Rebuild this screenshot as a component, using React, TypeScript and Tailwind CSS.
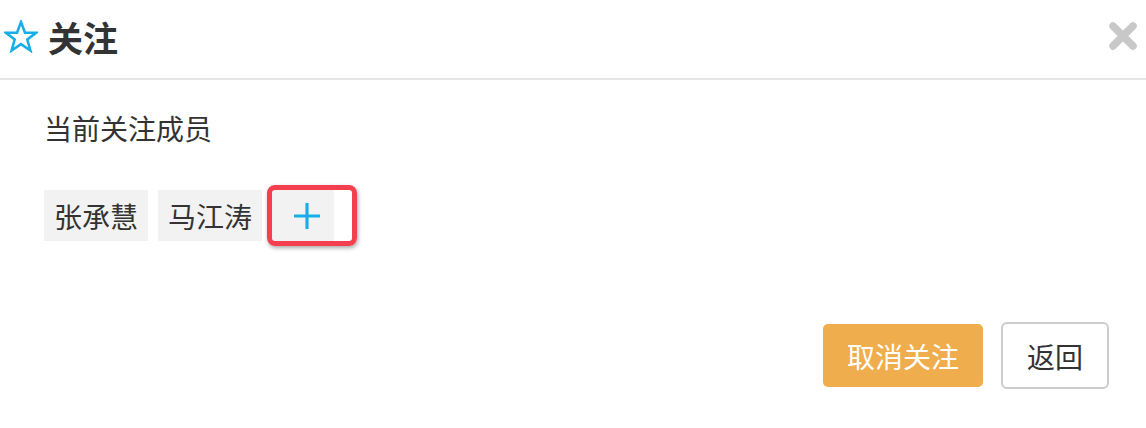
const font = { fontFamily: '"Noto Sans CJK SC", "Noto Sans", sans-serif' };

function StarIcon() {
  return (
    <svg width="34" height="33" viewBox="0 0 34 33" fill="none">
      <polygon
        points="17,2 21,12.6 32,12.8 23.3,19.6 26.4,30.5 17,24.1 7.6,30.5 10.7,19.6 2,12.8 13,12.6"
        stroke="#19aee8"
        strokeWidth="2.6"
        strokeLinejoin="miter"
      />
    </svg>
  );
}

function CloseIcon() {
  return (
    <svg width="30" height="30" viewBox="0 0 30 30">
      <path d="M5 5 L25 25 M25 5 L5 25" stroke="#c8c8c8" strokeWidth="7.5" strokeLinecap="round" />
    </svg>
  );
}

function PlusIcon() {
  return (
    <svg width="26" height="26" viewBox="0 0 26 26">
      <path d="M13 0 V26 M0 13 H26" stroke="#19aee8" strokeWidth="3.2" />
    </svg>
  );
}

export default function App() {
  const members = ['张承慧', '马江涛'];

  return (
    <div className="w-[1146px] h-[428px] bg-white text-[#333]" style={font}>
      <div className="h-[80px] flex items-center justify-between border-b-2 border-[#e5e5e5] pl-[4px] pr-[8px] pb-[6px]">
        <div className="flex items-center gap-[10px]">
          <StarIcon />
          <span className="text-[35px] font-bold leading-none">关注</span>
        </div>
        <CloseIcon />
      </div>

      <div className="pl-[44px] pr-[37px]">
        <div className="text-[28px] leading-[40px] mt-[28px]">当前关注成员</div>

        <div className="flex gap-[10px] mt-[42px]">
          {members.map((m) => (
            <div key={m} className="h-[51px] px-[10px] bg-[#f2f2f2] text-[28px] flex items-center">
              {m}
            </div>
          ))}
          <div className="relative">
            <div className="h-[51px] w-[62px] bg-[#f2f2f2] flex items-center pl-[22px]">
              <PlusIcon />
            </div>
            <div className="absolute left-[-5px] top-[-5px] w-[90px] h-[61px] rounded-[8px] border-[5px] border-[#f43f4e] shadow-[1px_2px_4px_rgba(0,0,0,0.35)]" />
          </div>
        </div>

        <div className="flex justify-end items-center gap-[18px] mt-[81px]">
          <button className="h-[63px] px-[24px] rounded-[5px] bg-[#f0ad4e] text-white text-[28px]">
            取消关注
          </button>
          <button className="h-[67px] px-[24px] rounded-[6px] border-2 border-[#cccccc] bg-white text-[#333] text-[28px]">
            返回
          </button>
        </div>
      </div>
    </div>
  );
}
